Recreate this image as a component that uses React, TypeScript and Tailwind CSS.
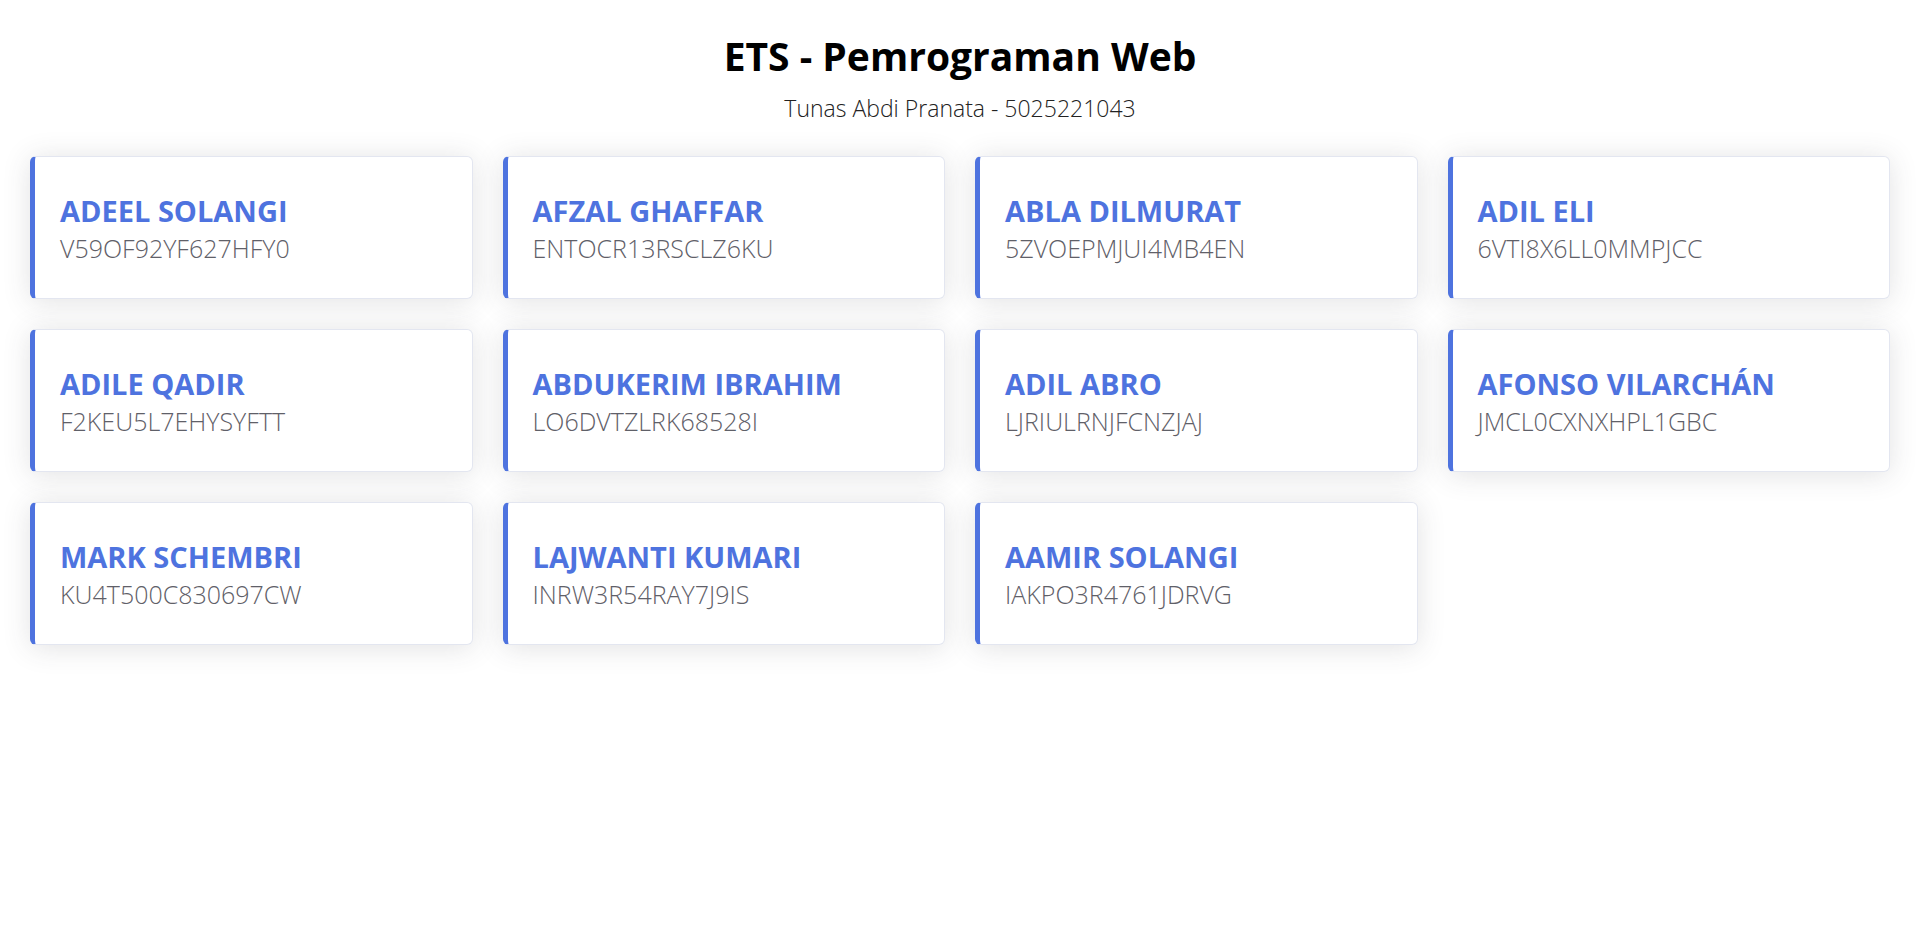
export default function App() {
  const people = [
    { name: "ADEEL SOLANGI", id: "V59OF92YF627HFY0" },
    { name: "AFZAL GHAFFAR", id: "ENTOCR13RSCLZ6KU" },
    { name: "ABLA DILMURAT", id: "5ZVOEPMJUI4MB4EN" },
    { name: "ADIL ELI", id: "6VTI8X6LL0MMPJCC" },
    { name: "ADILE QADIR", id: "F2KEU5L7EHYSYFTT" },
    { name: "ABDUKERIM IBRAHIM", id: "LO6DVTZLRK68528I" },
    { name: "ADIL ABRO", id: "LJRIULRNJFCNZJAJ" },
    { name: "AFONSO VILARCHÁN", id: "JMCL0CXNXHPL1GBC" },
    { name: "MARK SCHEMBRI", id: "KU4T500C830697CW" },
    { name: "LAJWANTI KUMARI", id: "INRW3R54RAY7J9IS" },
    { name: "AAMIR SOLANGI", id: "IAKPO3R4761JDRVG" },
  ]

  return (
    <div className="min-h-screen bg-white font-['Open_Sans',sans-serif]">
      {/* Header */}
      <div className="pt-[32px] text-center">
        <h1 className="text-[39px] leading-[48px] font-bold text-black">ETS - Pemrograman Web</h1>
        <p className="mt-[10px] text-[23px] leading-[36px] font-light text-[#222]">Tunas Abdi Pranata - 5025221043</p>
      </div>

      {/* Cards */}
      <div className="grid grid-cols-4 gap-[30px] px-[30px] pt-[30px]">
        {people.map((p) => (
          <div
            key={p.id}
            className="h-[143px] flex flex-col justify-center pl-[25px] pt-[2px] bg-white rounded-[6px] border border-[#e3e6f0] border-l-[5px] border-l-[#4e73df] shadow-[0_0.15rem_1.75rem_0_rgba(58,59,69,0.15)]"
          >
            <div className="text-[29px] leading-[38px] font-bold text-[#4e73df]">{p.name}</div>
            <div className="text-[25px] leading-[36px] font-light text-[#5f6068]">{p.id}</div>
          </div>
        ))}
      </div>
    </div>
  )
}
